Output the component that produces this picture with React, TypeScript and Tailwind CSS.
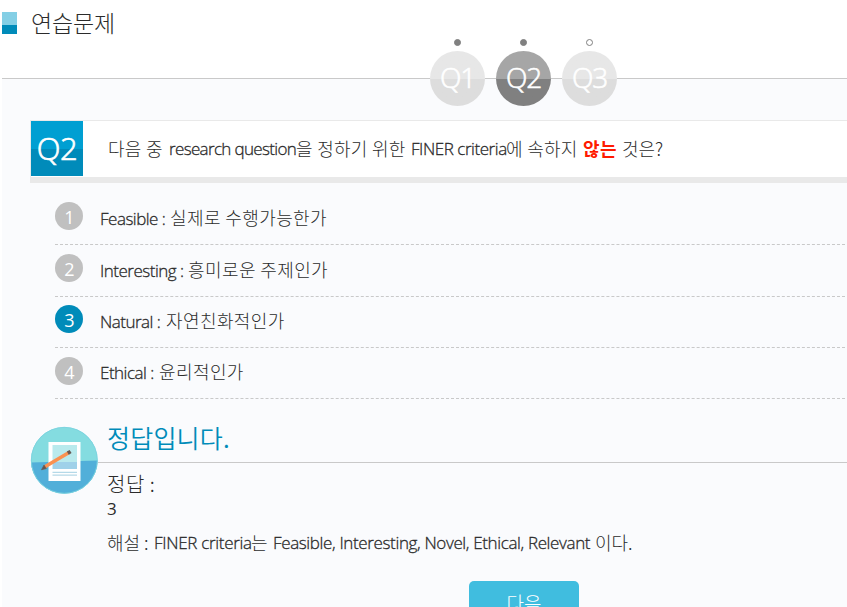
const latin = "font-['Open_Sans','Noto_Sans_CJK_KR',sans-serif]";
const korean = "font-['Noto_Sans_CJK_KR',sans-serif]";

function Seg({ className, ko, children }: { className: string; ko?: boolean; children: string }) {
  return (
    <span className={`inline-block shrink-0 whitespace-pre ${ko ? korean : latin} ${className}`}>{children}</span>
  );
}

const steps = [
  { label: "Q1", circle: "bg-linear-to-b from-[#e7e7e7] from-50% to-[#dddddd] to-50%", dot: "bg-[#808080]" },
  { label: "Q2", circle: "bg-linear-to-b from-[#a6a6a6] from-50% to-[#808080] to-50%", dot: "bg-[#808080]" },
  { label: "Q3", circle: "bg-linear-to-b from-[#e7e7e7] from-50% to-[#dddddd] to-50%", dot: "bg-white" },
];

const options = [
  { n: "1", en: "Feasible :", ko: "실제로 수행가능한가", gap: "w-[70px] tracking-[-0.5px]", row: "h-[52px]", badge: "mt-[9px]", text: "pt-[10px]", active: false },
  { n: "2", en: "Interesting :", ko: "흥미로운 주제인가", gap: "w-[88px] tracking-[-0.5px]", row: "h-[52px]", badge: "mt-[9px]", text: "pt-[10px]", active: false },
  { n: "3", en: "Natural :", ko: "자연친화적인가", gap: "w-[66px] tracking-[-0.5px]", row: "h-[51px]", badge: "mt-[8px]", text: "pt-[9px]", active: true },
  { n: "4", en: "Ethical :", ko: "윤리적인가", gap: "w-[59px] tracking-[-0.5px]", row: "h-[51px]", badge: "mt-[9px]", text: "pt-[9px]", active: false },
];

function NoteIcon() {
  return (
    <svg className="block h-[68px] w-[68px] shrink-0" viewBox="0 0 68 68">
      <defs>
        <clipPath id="disc">
          <circle cx="34.3" cy="34.3" r="33.3" />
        </clipPath>
      </defs>
      <g clipPath="url(#disc)">
        <rect width="68" height="68" fill="#84dce0" />
        <path d="M0 36.5 68 34.5V68H0Z" fill="#51afd9" />
      </g>
      <circle cx="34.3" cy="34.3" r="33" fill="none" stroke="#7ad3df" strokeWidth=".9" />
      <rect x="18.5" y="16" width="32" height="39" fill="#fff" />
      <rect x="22.5" y="19" width="24.5" height="17" fill="#b9eaed" />
      <rect x="22.5" y="36" width="24.5" height="7" fill="#9fd1e9" />
      <path d="M22.5 46.3H47M22.5 49.2H47" stroke="#b5d9e8" strokeWidth="1.3" />
      <path d="M14.5 41 39 26.5" stroke="#fa9150" strokeWidth="3.6" />
      <path d="M37.8 27.2 40.6 25.5" stroke="#665a55" strokeWidth="3.8" />
      <path d="M11.5 43.8 14 39 16.3 42.6Z" fill="#66574f" stroke="#66574f" strokeWidth=".6" />
    </svg>
  );
}

export default function App() {
  return (
    <div className="h-[607px] w-[847px] overflow-hidden bg-white pl-[2px] text-[#2b2b2b]">
      <div className="flex h-full flex-col bg-[#fafbfd]">
        <header className="flex h-[79px] shrink-0 border-b border-[#c9c9c9] bg-white">
          <div className="mt-[12px] h-[22px] w-[15px] bg-linear-to-b from-[#84cfe5] from-60% to-[#008bb9] to-60%" />
          <h1 className="ml-[14px] w-[399px] pt-[6px] text-[23px] leading-[33px]">
            <Seg ko className="font-light tracking-[-0.2px]">연습문제</Seg>
          </h1>
          <nav className="flex h-[106px] shrink-0 gap-[11px] pt-[39px]">
            {steps.map((s) => (
              <div key={s.label} className="flex w-[55px] flex-col items-center">
                <i className={`h-[7px] w-[7px] rounded-full border-[1.5px] border-[#808080] ${s.dot}`} />
                <span className={`mt-[5px] flex h-[55px] w-[55px] shrink-0 items-center justify-center rounded-full pb-[4px] text-[28px] leading-none text-white ${s.circle}`}>
                  <Seg className="font-light tracking-[-1.2px] [-webkit-text-stroke:0.6px]">{s.label}</Seg>
                </span>
              </div>
            ))}
          </nav>
        </header>

        <section className="mt-[41px] ml-[28px] flex h-[63px] shrink-0 border-t border-b-[6px] border-l border-[#e9e9e9] bg-white">
          <div className="flex h-[55px] w-[52px] items-center justify-center bg-linear-to-b from-[#009fd2] from-51% to-[#008bba] to-51% text-[31px] leading-none text-white">
            <Seg className="font-light tracking-[-0.5px] [-webkit-text-stroke:0.7px]">Q2</Seg>
          </div>
          <p className="ml-[25px] flex pt-[13px] text-[17px] leading-[28px]">
            <Seg ko className="w-[61px] text-[18px] font-light tracking-[0.3px]">다음 중</Seg>
            <Seg className="w-[127px] pt-px font-light tracking-[-0.65px] [-webkit-text-stroke:0.3px]">research question</Seg>
            <Seg ko className="w-[115px] text-[18px] font-light tracking-[0.3px]">을 정하기 위한</Seg>
            <Seg className="w-[95px] pt-px font-light tracking-[-0.45px] [-webkit-text-stroke:0.3px]">FINER criteria</Seg>
            <Seg ko className="w-[77px] text-[18px] font-light tracking-[0.3px]">에 속하지</Seg>
            <b className="w-[39px] font-['Noto_Sans_CJK_KR',sans-serif] text-[18px] font-bold tracking-[0.5px] text-[#ff1a00]">않는</b>
            <Seg ko className="text-[18px] font-light">것은?</Seg>
          </p>
        </section>

        <ul className="mr-[2px] ml-[53px] shrink-0 pt-[10px]">
          {options.map((o) => (
            <li key={o.n} className={`flex ${o.row} border-b border-dashed border-[#c9c9c9]`}>
              <span className={`${o.badge} flex h-[28px] w-[28px] shrink-0 items-center justify-center rounded-full text-[18px] leading-none text-white ${o.active ? "bg-[#008bb9]" : "bg-[#c0c0c0]"}`}>
                <Seg className="pt-[2px] pl-px font-normal">{o.n}</Seg>
              </span>
              <p className={`ml-[17px] flex ${o.text} text-[17px] leading-[28px]`}>
                <Seg className={`${o.gap} pt-[2px] font-light [-webkit-text-stroke:0.3px]`}>{o.en}</Seg>
                <Seg ko className="text-[18px] font-light tracking-[0.4px]">{o.ko}</Seg>
              </p>
            </li>
          ))}
        </ul>

        <section className="mt-[27px] ml-[28px] flex h-[68px] shrink-0">
          <NoteIcon />
          <div className="flex-1">
            <h2 className="h-[37px] border-b border-[#c9c9c9] pl-[9px] text-[25px] leading-[22px] text-[#008bb9]">
              <Seg ko className="font-[360] tracking-[0.2px]">정답입니다.</Seg>
            </h2>
            <div className="pl-[9px] text-[20px]">
              <p className="h-[34px] pt-[8px] leading-[26px]"><Seg ko className="font-light tracking-[0.5px]">정답 :</Seg></p>
              <p className="text-[17px] leading-[24px]"><Seg className="font-normal">3</Seg></p>
            </div>
          </div>
        </section>
        <p className="mt-[34px] ml-[105px] flex h-[29px] shrink-0 text-[17px] leading-[28px]">
          <Seg ko className="w-[47px] text-[18px] font-light">해설 :</Seg>
          <Seg className="w-[97px] pt-px font-light tracking-[-0.3px] [-webkit-text-stroke:0.3px]">FINER criteria</Seg>
          <Seg ko className="w-[22px] text-[18px] font-light">는</Seg>
          <Seg className="w-[322px] pt-px font-light tracking-[-0.36px] [-webkit-text-stroke:0.3px]">Feasible, Interesting, Novel, Ethical, Relevant</Seg>
          <Seg ko className="text-[18px] font-light">이다.</Seg>
        </p>
        <button className="mt-[24px] ml-[467px] h-[44px] w-[110px] shrink-0 rounded-[5px] bg-[#40bddf] text-[19px] leading-[36px] text-white">
          <Seg ko className="font-light">다음</Seg>
        </button>
      </div>
    </div>
  );
}
